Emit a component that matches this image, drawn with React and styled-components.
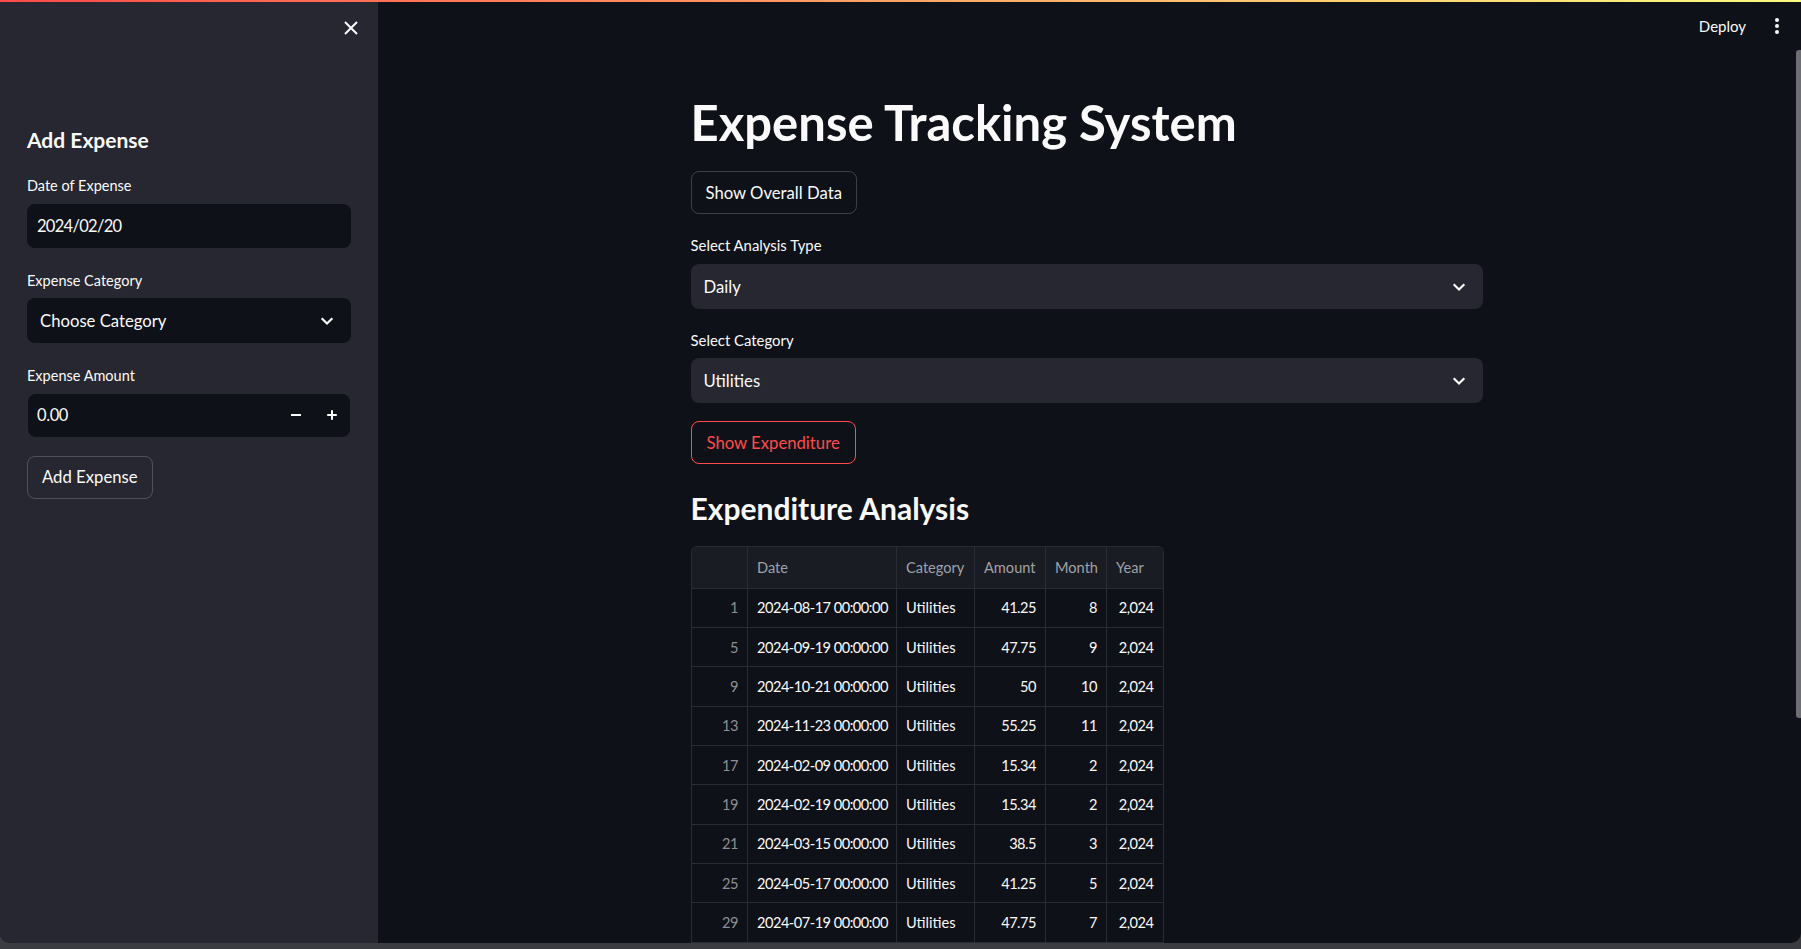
import React from 'react';
import styled, { createGlobalStyle } from 'styled-components';

const FONT = '"Lato", "Noto Sans", sans-serif';

const Global = createGlobalStyle`
  html, body { margin: 0; padding: 0; }
  body {
    background: linear-gradient(to bottom, #3b3c41 0, #3b3c41 946px, #000 946px);
    font-family: ${FONT};
    color: #fafafa;
    overflow: hidden;
  }
  * { box-sizing: border-box; }
`;

const Frame = styled.div`
  position: relative;
  display: flex;
  width: 1801px;
  height: 943px;
  overflow: hidden;
  border-radius: 0 0 10px 10px;
  background: #0e1117;
`;

const Decoration = styled.div`
  position: absolute;
  top: 0;
  left: 0;
  right: 0;
  height: 2px;
  background: linear-gradient(90deg, #ff4b4b, #fffd80);
  z-index: 5;
`;

const Sidebar = styled.aside`
  flex: none;
  width: 378px;
  background: #262730;
  display: flex;
  flex-direction: column;
`;

const SidebarTop = styled.div`
  height: 56px;
  display: flex;
  justify-content: flex-end;
  align-items: center;
  padding-right: 15px;
`;

const IconButton = styled.button`
  width: 24px;
  height: 24px;
  padding: 0;
  border: none;
  background: transparent;
  color: #fafafa;
  display: flex;
  align-items: center;
  justify-content: center;
`;

const SidebarBody = styled.div`
  padding: 71px 27px 0;
  display: flex;
  flex-direction: column;
`;

const SideHeading = styled.h2`
  margin: 0 0 23px;
  font-size: 21px;
  line-height: 25px;
  font-weight: 700;
`;

const Field = styled.div`
  display: flex;
  flex-direction: column;
  margin-bottom: ${(p) => p.$mb}px;
`;

const Label = styled.label`
  font-size: ${(p) => p.$size || 14.5}px;
  line-height: 21px;
  height: 21px;
  margin-bottom: ${(p) => p.$gap || 7.5}px;
  color: #fafafa;
`;

const TextBox = styled.div`
  height: ${(p) => p.$h}px;
  background: #0e1117;
  border-radius: 8px;
  padding: 0 10px;
  display: flex;
  align-items: center;
  font-size: 16.5px;
  letter-spacing: -0.7px;
`;

const SelectBox = styled.div`
  height: ${(p) => p.$h}px;
  background: ${(p) => p.$bg};
  border-radius: 8px;
  padding: 0 14px 0 13px;
  display: flex;
  align-items: center;
  justify-content: space-between;
  font-size: 16.7px;
`;

const NumberBox = styled.div`
  height: 43px;
  background: #0e1117;
  border-radius: 8px;
  display: flex;
  align-items: stretch;
  margin: 0 1px;
`;

const NumberValue = styled.div`
  flex: 1;
  display: flex;
  align-items: center;
  padding-left: 9px;
  font-size: 16.5px;
  letter-spacing: -0.4px;
`;

const StepButton = styled.div`
  width: 36px;
  display: flex;
  align-items: center;
  justify-content: center;
`;

const Button = styled.button`
  align-self: flex-start;
  height: 43px;
  padding: 0 ${(p) => (p.$active ? 15 : 14)}px;
  border-radius: 8px;
  border: 1px solid ${(p) => (p.$active ? '#ff4b4b' : 'rgba(250,250,250,0.2)')};
  color: ${(p) => (p.$active ? '#ff4b4b' : '#fafafa')};
  background: transparent;
  font-family: ${FONT};
  font-size: 16.7px;
  margin-bottom: ${(p) => p.$mb || 0}px;
`;

const MainColumn = styled.main`
  flex: 1;
  display: flex;
  min-width: 0;
`;

const MainArea = styled.div`
  flex: 1;
  display: flex;
  flex-direction: column;
  min-width: 0;
`;

const Header = styled.header`
  height: 52px;
  flex: none;
  display: flex;
  justify-content: flex-end;
  align-items: center;
  gap: 29px;
  padding-right: 16px;
`;

const DeployText = styled.span`
  font-size: 15px;
  color: #fafafa;
`;

const Content = styled.div`
  width: 792px;
  margin: 0 auto;
  padding-top: 41px;
  display: flex;
  flex-direction: column;
`;

const Title = styled.h1`
  margin: 0 0 19px;
  font-size: 49px;
  line-height: 59px;
  font-weight: 700;
`;

const SubTitle = styled.h3`
  margin: 0 0 20px;
  font-size: 30px;
  line-height: 36px;
  font-weight: 700;
`;

const ScrollTrack = styled.div`
  flex: none;
  width: 6px;
  display: flex;
  justify-content: flex-end;
`;

const ScrollThumb = styled.div`
  margin-top: 50px;
  width: 5px;
  height: 668px;
  background: #6e6f73;
  border-radius: 3px 0 0 3px;
`;

const TableWrap = styled.div`
  align-self: flex-start;
  border: 1px solid #2a2c33;
  border-bottom: none;
  border-radius: 6px 6px 0 0;
  overflow: hidden;
`;

const Table = styled.table`
  width: 471px;
  border-collapse: collapse;
  table-layout: fixed;
  font-size: 14.6px;
`;

const HeadCell = styled.th`
  height: 41px;
  background: #1a1c24;
  color: #a0a1a6;
  font-weight: 400;
  text-align: left;
  padding: 0 8px 0 9px;
  border-right: 1px solid #2a2c33;
  border-bottom: 1px solid #2a2c33;
  overflow: hidden;
  white-space: nowrap;
  &:last-child { border-right: none; }
`;

const Cell = styled.td`
  height: 39.35px;
  padding: 0 9px;
  text-align: ${(p) => (p.$right ? 'right' : 'left')};
  color: ${(p) => (p.$muted ? '#8e8f94' : '#fafafa')};
  letter-spacing: ${(p) => (p.$num ? '-0.5px' : '0')};
  border-right: 1px solid #2a2c33;
  border-bottom: 1px solid #2a2c33;
  white-space: nowrap;
  overflow: hidden;
  &:last-child { border-right: none; }
`;

const Chevron = () => (
  <svg width="20" height="20" viewBox="0 0 24 24" fill="none" stroke="#fafafa" strokeWidth="2.6" strokeLinecap="square" strokeLinejoin="miter">
    <path d="M6.5 9.5l5.5 5.5 5.5-5.5" />
  </svg>
);

const CloseIcon = () => (
  <svg width="24" height="24" viewBox="0 0 24 24" fill="none" stroke="#fafafa" strokeWidth="2">
    <path d="M6 6l12 12M18 6L6 18" />
  </svg>
);

const Minus = () => (
  <svg width="12" height="12" viewBox="0 0 12 12">
    <rect x="1" y="5" width="10" height="2" fill="#fafafa" />
  </svg>
);

const Plus = () => (
  <svg width="12" height="12" viewBox="0 0 12 12">
    <rect x="1.2" y="5" width="9.6" height="2" fill="#fafafa" />
    <rect x="5" y="1.2" width="2" height="9.6" fill="#fafafa" />
  </svg>
);

const Dots = () => (
  <svg width="4" height="16" viewBox="0 0 4 16" fill="#fafafa">
    <circle cx="2" cy="2" r="2" />
    <circle cx="2" cy="8" r="2" />
    <circle cx="2" cy="14" r="2" />
  </svg>
);

const columns = [
  { key: 'idx', label: '', width: 56, right: true, muted: true, num: true },
  { key: 'date', label: 'Date', width: 149, num: true },
  { key: 'cat', label: 'Category', width: 78 },
  { key: 'amt', label: 'Amount', width: 71, right: true, num: true },
  { key: 'month', label: 'Month', width: 61, right: true, num: true },
  { key: 'year', label: 'Year', width: 56, right: true, num: true },
];

const rows = [
  [1, '2024-08-17 00:00:00', 'Utilities', '41.25', 8, '2,024'],
  [5, '2024-09-19 00:00:00', 'Utilities', '47.75', 9, '2,024'],
  [9, '2024-10-21 00:00:00', 'Utilities', '50', 10, '2,024'],
  [13, '2024-11-23 00:00:00', 'Utilities', '55.25', 11, '2,024'],
  [17, '2024-02-09 00:00:00', 'Utilities', '15.34', 2, '2,024'],
  [19, '2024-02-19 00:00:00', 'Utilities', '15.34', 2, '2,024'],
  [21, '2024-03-15 00:00:00', 'Utilities', '38.5', 3, '2,024'],
  [25, '2024-05-17 00:00:00', 'Utilities', '41.25', 5, '2,024'],
  [29, '2024-07-19 00:00:00', 'Utilities', '47.75', 7, '2,024'],
];

export default function App() {
  return (
    <>
      <Global />
      <Frame>
        <Decoration />
        <Sidebar>
          <SidebarTop>
            <IconButton aria-label="Close sidebar"><CloseIcon /></IconButton>
          </SidebarTop>
          <SidebarBody>
            <SideHeading>Add Expense</SideHeading>
            <Field $mb={22.5}>
              <Label>Date of Expense</Label>
              <TextBox $h={44}>2024/02/20</TextBox>
            </Field>
            <Field $mb={22}>
              <Label $gap={7}>Expense Category</Label>
              <SelectBox $h={45} $bg="#0e1117">
                <span>Choose Category</span>
                <Chevron />
              </SelectBox>
            </Field>
            <Field $mb={19}>
              <Label>Expense Amount</Label>
              <NumberBox>
                <NumberValue>0.00</NumberValue>
                <StepButton><Minus /></StepButton>
                <StepButton><Plus /></StepButton>
              </NumberBox>
            </Field>
            <Button>Add Expense</Button>
          </SidebarBody>
        </Sidebar>
        <MainColumn>
          <MainArea>
            <Header>
              <DeployText>Deploy</DeployText>
              <Dots />
            </Header>
            <Content>
              <Title>Expense Tracking System</Title>
              <Button $mb={20.5}>Show Overall Data</Button>
              <Field $mb={20.5}>
                <Label $gap={8.5} $size={14.9}>Select Analysis Type</Label>
                <SelectBox $h={45} $bg="#262730">
                  <span>Daily</span>
                  <Chevron />
                </SelectBox>
              </Field>
              <Field $mb={18}>
                <Label $size={14.9}>Select Category</Label>
                <SelectBox $h={45} $bg="#262730">
                  <span>Utilities</span>
                  <Chevron />
                </SelectBox>
              </Field>
              <Button $active $mb={26}>Show Expenditure</Button>
              <SubTitle>Expenditure Analysis</SubTitle>
              <TableWrap>
                <Table>
                  <colgroup>
                    {columns.map((c) => (
                      <col key={c.key} style={{ width: c.width }} />
                    ))}
                  </colgroup>
                  <thead>
                    <tr>
                      {columns.map((c) => (
                        <HeadCell key={c.key}>{c.label}</HeadCell>
                      ))}
                    </tr>
                  </thead>
                  <tbody>
                    {rows.map((r) => (
                      <tr key={r[0]}>
                        {r.map((v, i) => (
                          <Cell
                            key={i}
                            $right={columns[i].right}
                            $muted={columns[i].muted}
                            $num={columns[i].num}
                          >
                            {v}
                          </Cell>
                        ))}
                      </tr>
                    ))}
                  </tbody>
                </Table>
              </TableWrap>
            </Content>
          </MainArea>
          <ScrollTrack>
            <ScrollThumb />
          </ScrollTrack>
        </MainColumn>
      </Frame>
    </>
  );
}
